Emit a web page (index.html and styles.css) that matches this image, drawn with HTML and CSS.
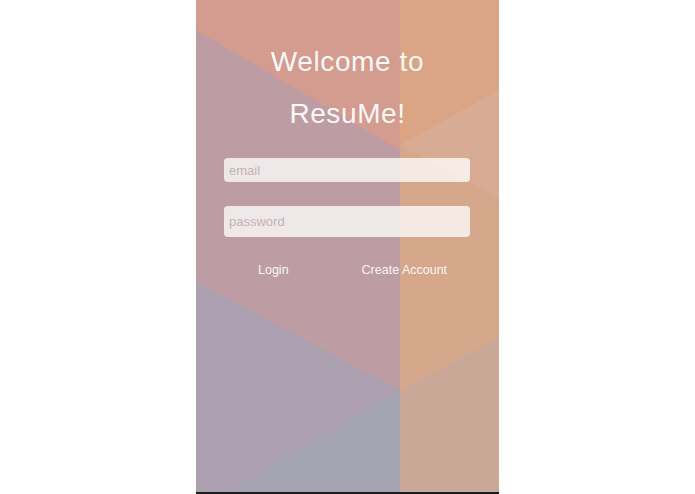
FILE: index.html
```html
<!DOCTYPE html>
<html>
<head>
<meta charset="utf-8">
<link rel="stylesheet" href="styles.css">
</head>
<body>
<div class="screen">
  <svg class="bg" viewBox="0 0 303 492" preserveAspectRatio="none" aria-hidden="true">
    <rect x="0" y="0" width="204" height="492" fill="#bd9da3"/>
    <polygon points="0,0 204,0 204,150 0,30" fill="#d49b8f"/>
    <polygon points="0,282 204,390 33,492 0,492" fill="#aca0b0"/>
    <polygon points="204,390 204,492 33,492" fill="#a3a4b0"/>
    <rect x="204" y="0" width="99" height="492" fill="#d5a88b"/>
    <polygon points="204,0 303,0 303,90 204,145" fill="#dba484"/>
    <polygon points="204,145 303,90 303,198" fill="#d8ac94"/>
    <polygon points="204,390 303,338 303,492 204,492" fill="#c9a898"/>
  </svg>
  <div class="content">
    <h1 class="title">Welcome to<br>ResuMe!</h1>
    <input class="field field-email" type="text" placeholder="email">
    <input class="field field-password" type="password" placeholder="password">
    <div class="actions">
      <span class="action">Login</span>
      <span class="action">Create Account</span>
    </div>
  </div>
</div>
</body>
</html>
```

FILE: styles.css
```css
html, body {
  margin: 0;
  padding: 0;
  background: #ffffff;
  height: 494px;
  overflow: hidden;
}

.screen {
  position: relative;
  width: 303px;
  height: 492px;
  margin: 0 auto;
  border-bottom: 2px solid #1c1c1c;
  overflow: hidden;
  font-family: "Liberation Sans", Arial, sans-serif;
}

.bg {
  position: absolute;
  left: 0;
  top: 0;
  width: 100%;
  height: 100%;
  display: block;
}

.content {
  position: relative;
  display: flex;
  flex-direction: column;
  padding-top: 36px;
  box-sizing: border-box;
  height: 100%;
  border-top: 1px solid rgba(255, 255, 255, 0.18);
  margin-top: -1px;
}

.title {
  margin: 0;
  text-align: center;
  font-weight: normal;
  font-size: 28px;
  line-height: 52px;
  letter-spacing: 0.6px;
  color: rgba(255, 255, 255, 0.95);
}

.field {
  display: block;
  margin: 0 29px 0 28px;
  padding: 0 0 0 5px;
  border: none;
  outline: none;
  border-radius: 4px;
  background: rgba(255, 255, 255, 0.76);
  font-family: "Liberation Sans", Arial, sans-serif;
  font-size: 13px;
  color: #6a5a60;
  box-sizing: border-box;
}

.field::placeholder {
  color: #c6b0b8;
}

.field-email {
  margin-top: 18px;
  height: 24px;
}

.field-password {
  margin-top: 24px;
  height: 31px;
}

.actions {
  display: flex;
  flex-direction: row;
  gap: 73px;
  padding-left: 62px;
  margin-top: 25px;
  font-size: 12.5px;
  line-height: 16px;
  color: rgba(255, 255, 255, 0.93);
}
```
